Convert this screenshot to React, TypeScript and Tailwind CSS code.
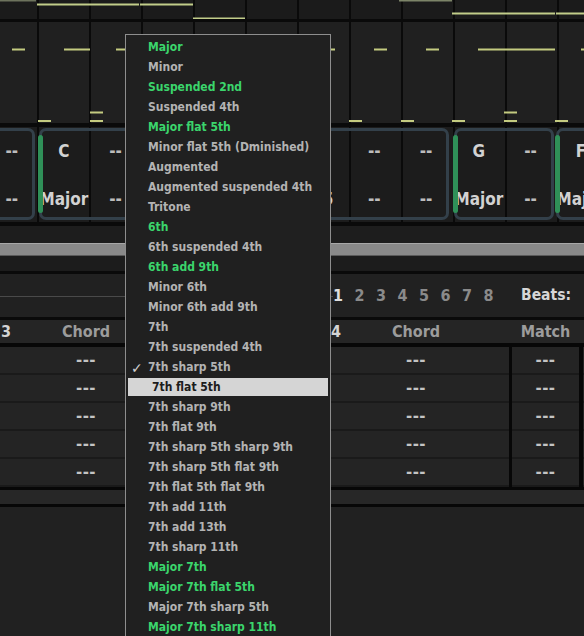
import React from "react";

const MENU: [string, boolean][] = [
  ["Major", true],
  ["Minor", false],
  ["Suspended 2nd", true],
  ["Suspended 4th", false],
  ["Major flat 5th", true],
  ["Minor flat 5th (Dminished)", false],
  ["Augmented", false],
  ["Augmented suspended 4th", false],
  ["Tritone", false],
  ["6th", true],
  ["6th suspended 4th", false],
  ["6th add 9th", true],
  ["Minor 6th", false],
  ["Minor 6th add 9th", false],
  ["7th", false],
  ["7th suspended 4th", false],
  ["7th sharp 5th", false],
  ["7th flat 5th", false],
  ["7th sharp 9th", false],
  ["7th flat 9th", false],
  ["7th sharp 5th sharp 9th", false],
  ["7th sharp 5th flat 9th", false],
  ["7th flat 5th flat 9th", false],
  ["7th add 11th", false],
  ["7th add 13th", false],
  ["7th sharp 11th", false],
  ["Major 7th", true],
  ["Major 7th flat 5th", true],
  ["Major 7th sharp 5th", false],
  ["Major 7th sharp 11th", true],
];

const Y = "#c4cb80";

const topSegs: [number, number, number, number, string][] = [
  [0, 0, 36, 1.5, "#6d735d"],
  [37, 3.5, 102, 2, "#c2cd8a"],
  [140, 3.5, 53, 2, "#c2cd8a"],
  [193, 17.5, 52, 2, "#c2cd8a"],
  [399, 0, 53, 1.5, "#7c8468"],
  [452, 12.5, 103, 2, "#c2cd8a"],
  [556, 12.5, 28, 2, "#c2cd8a"],
];

const midSegs: [number, number, number][] = [
  [12, 26.5, 13],
  [64, 26.5, 26],
  [116, 26.5, 13],
  [168, 26.5, 13],
  [272, 26.5, 13],
  [322, 26.5, 13],
  [374, 26.5, 13],
  [426, 26.5, 13],
  [478, 26.5, 77],
  [581, 26.5, 13],
  [90, 89.5, 13],
  [504, 89.5, 13],
  [38, 98, 13],
  [90, 98, 13],
  [142, 98, 13],
  [246, 98, 13],
  [349, 98, 13],
  [401, 98, 13],
  [452, 98, 13],
  [504, 98, 13],
  [555, 98, 13],
];

type Cell = [string, string];

function Block({
  cells,
  green,
  className,
}: {
  cells: Cell[];
  green: boolean;
  className: string;
}) {
  return (
    <div
      className={`relative shrink-0 h-[92px] rounded-[7px] border-[3px] border-[#33404a] ${className}`}
    >
      {green && (
        <div className="absolute left-[-4px] top-[4px] bottom-[4px] w-[5px] rounded-full bg-[#2f9058]" />
      )}
      <div className="flex -ml-[4px]">
        {cells.map(([a, b], i) => (
          <div key={i} className="w-[51.75px] shrink-0 flex flex-col text-[17px] whitespace-nowrap">
            <div
              className={`h-[42px] flex items-center justify-center ${
                a === "--" ? "text-[#bcbcbc]" : "text-[#d2d2d2]"
              }`}
            >
              {a}
            </div>
            <div
              className={`h-[44px] pt-[9px] flex items-center justify-center ${
                b === "--" ? "text-[#bcbcbc]" : "text-[#d2d2d2]"
              }`}
            >
              {b}
            </div>
          </div>
        ))}
      </div>
    </div>
  );
}

function HeaderGroup({ n }: { n: string }) {
  return (
    <>
      <div className="w-[186px] shrink-0 flex items-center">
        <span className="w-[30px] pl-[8px] text-[#d4d4d4]">{n}</span>
        <span className="flex-1 text-center text-[#9c9c9c]">Chord</span>
        <span className="w-[30px]" />
      </div>
      <div className="w-[3px] shrink-0" />
      <div className="w-[67px] shrink-0 text-center text-[#9c9c9c]">Match</div>
      <div className="w-[4px] shrink-0" />
      <div className="w-[70px] shrink-0" />
    </>
  );
}

function Dash() {
  return (
    <span className="font-['DejaVu_Sans',sans-serif] text-[15px] tracking-[0.5px] text-[#c4c4c4]">
      ---
    </span>
  );
}

function RowGroup() {
  return (
    <>
      <div className="w-[186px] shrink-0 flex items-center justify-center bg-[#242424] border-b-2 border-[#1a1a1a]">
        <Dash />
      </div>
      <div className="w-[3px] shrink-0 bg-[#070707]" />
      <div className="w-[67px] shrink-0 flex items-center justify-center bg-[#242424] border-b-2 border-[#1a1a1a]">
        <Dash />
      </div>
      <div className="w-[4px] shrink-0 bg-[#070707]" />
      <div className="w-[70px] shrink-0 bg-[#242424] border-b-2 border-[#1a1a1a]" />
    </>
  );
}

export default function App() {
  return (
    <div className="relative w-[584px] h-[636px] overflow-hidden bg-[#212121] font-['DejaVu_Sans_Condensed','DejaVu_Sans',sans-serif] font-bold">
      {/* melody top strip */}
      <div className="h-[19px] bg-[#1b1b1b] bg-[image:repeating-linear-gradient(90deg,transparent_0px,transparent_37px,#0a0a0a_37px,#0a0a0a_39px,transparent_39px,transparent_52px)]">
        <svg width="584" height="19" className="block">
          {topSegs.map(([x, y, w, h, c], i) => (
            <rect key={i} x={x} y={y} width={w} height={h} fill={c} />
          ))}
        </svg>
      </div>
      <div className="h-[3px] bg-[#0a0a0a]" />
      {/* note grid */}
      <div className="h-[101px] bg-[#202020] bg-[image:repeating-linear-gradient(90deg,transparent_0px,transparent_37px,#0a0a0a_37px,#0a0a0a_39px,transparent_39px,transparent_52px)]">
        <svg width="584" height="101" className="block">
          {midSegs.map(([x, y, w], i) => (
            <rect key={i} x={x} y={y} width={w} height={2} fill={Y} />
          ))}
        </svg>
      </div>
      <div className="h-[4px] bg-[#0a0a0a]" />
      {/* chord blocks */}
      <div className="h-[95px] pt-px flex items-start bg-[#1c1c1c] bg-[image:repeating-linear-gradient(90deg,transparent_0px,transparent_37px,#0a0a0a_37px,#0a0a0a_39px,transparent_39px,transparent_52px)]">
        <Block className="-ml-[13px] w-[48px]" green={false} cells={[["--", "--"]]} />
        <Block
          className="ml-[4px] w-[410px]"
          green
          cells={[
            ["C", "Major"],
            ["--", "--"],
            ["--", "--"],
            ["--", "--"],
            ["--", "--"],
            ["--", "b5"],
            ["--", "--"],
            ["--", "--"],
          ]}
        />
        <Block
          className="ml-[5px] w-[100px]"
          green
          cells={[
            ["G", "Major"],
            ["--", "--"],
          ]}
        />
        <Block
          className="ml-[2px] w-[100px]"
          green
          cells={[
            ["F", "Major"],
            ["--", "--"],
          ]}
        />
      </div>
      <div className="h-[4px] bg-[#0a0a0a]" />
      <div className="h-[17px] bg-[#1d1d1d]" />
      {/* scrollbar */}
      <div className="h-[13px] bg-[#898989] border-t border-t-[#a8a8a8] border-b border-b-[#5a5a5a]" />
      <div className="h-[15px] bg-[#1c1c1c]" />
      <div className="h-[3px] bg-[#0a0a0a]" />
      {/* toolbar */}
      <div className="h-[43px] bg-[#212121] flex items-center">
        <div className="w-[333px] shrink-0 self-start h-[23px] border-b border-[#4a4a4a]" />
        <div className="flex text-[16px] text-[#8a8a8a]">
          {["1", "2", "3", "4", "5", "6", "7", "8"].map((d, i) => (
            <span key={d} className={`w-[21.5px] ${i === 0 ? "text-[#dedede]" : ""}`}>
              {d}
            </span>
          ))}
        </div>
        <span className="ml-[16px] text-[15.5px] text-[#d6d6d6]">Beats:</span>
      </div>
      <div className="h-[3px] bg-[#0a0a0a]" />
      {/* table header */}
      <div className="h-[23px] bg-[#252525] flex -ml-[7px] text-[16px] items-center">
        <HeaderGroup n="3" />
        <HeaderGroup n="4" />
      </div>
      <div className="h-[4px] bg-[#070707]" />
      {[0, 1, 2, 3, 4].map((r) => (
        <div key={r} className="h-[28px] flex -ml-[7px]">
          <RowGroup />
          <RowGroup />
        </div>
      ))}
      <div className="h-[3px] bg-[#070707]" />
      <div className="h-[14px] bg-[#272727]" />
      <div className="h-[3px] bg-[#070707]" />

      {/* dropdown menu */}
      <div className="absolute left-[125px] top-[34px] w-[206px] h-[620px] bg-[#202020] border border-[#8e8e8e] pt-[2px] text-[12px] font-bold">
        {MENU.map(([label, green], i) =>
          i === 17 ? (
            <div key={i} className="h-[20px] py-px px-[2px]">
              <div className="h-[18px] bg-[#d5d5d5] text-[#1c1c1c] pl-[24px] flex items-center">
                {label}
              </div>
            </div>
          ) : (
            <div
              key={i}
              className={`relative h-[20px] pl-[22px] flex items-center whitespace-nowrap ${
                green ? "text-[#3bd56c]" : "text-[#b3b3b3]"
              }`}
            >
              {i === 16 && (
                <span className="absolute left-[5px] top-[1px] font-['DejaVu_Sans',sans-serif] text-[14px] font-normal text-[#d0d0d0]">
                  ✓
                </span>
              )}
              {label}
            </div>
          )
        )}
      </div>
    </div>
  );
}
